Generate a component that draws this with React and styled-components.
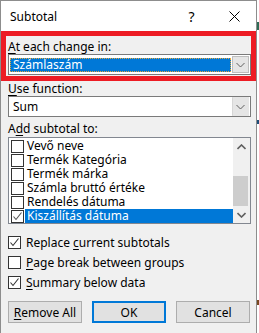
import React from "react";
import styled, { createGlobalStyle } from "styled-components";

const GlobalStyle = createGlobalStyle`
  body {
    margin: 0;
    background: #ffffff;
    font-family: "Noto Sans", "Open Sans", sans-serif;
    font-size: 12px;
    color: #000;
  }
`;

const Screen = styled.div`
  display: flex;
  width: 259px;
  height: 333px;
  overflow: hidden;
`;

const Dialog = styled.div`
  width: 255px;
  height: 332px;
  border: 1px solid #8d8d8d;
  border-bottom: none;
  background: #f0f0f0;
  display: flex;
  flex-direction: column;
`;

const Backdrop = styled.div`
  width: 2px;
  background: linear-gradient(
    #ffffff 0 22px,
    #2e6b55 22px 30px,
    #ffffff 30px 120px,
    #1f4e79 120px 124px,
    #ffffff 124px 300px,
    #7a4a22 300px 305px,
    #ffffff 305px
  );
`;

const TitleBar = styled.div`
  height: 30px;
  background: #ffffff;
  display: flex;
  align-items: center;
  padding-left: 9px;
`;

const Title = styled.div`
  flex: 1;
  line-height: 15px;
`;

const TitleButton = styled.div`
  width: 43px;
  height: 30px;
  display: flex;
  align-items: center;
  justify-content: center;
  font-size: 14px;
`;

const Body = styled.div`
  padding: 0 5px 0 7px;
  display: flex;
  flex-direction: column;
`;

const Highlight = styled.div`
  margin: 0 -5px 0 -7px;
  border: 5px solid #ed1c24;
  padding: 3px 0 1px 2px;
`;

const Label = styled.div`
  line-height: 15px;
  height: 15px;
  margin-top: ${(p) => p.$gap || 0}px;
  white-space: nowrap;
`;

const Key = styled.span`
  text-decoration: underline;
  text-underline-offset: 2px;
`;

const Combo = styled.div`
  height: 19px;
  border: 1px solid #7a7a7a;
  background: #ffffff;
  display: flex;
  align-items: center;
`;

const ComboValue = styled.div`
  flex: 1;
  height: 12px;
  line-height: 12px;
  margin: 0 1px 0 1px;
  padding: 0 2px;
  background: ${(p) => (p.$selected ? "#0078d7" : "transparent")};
  color: ${(p) => (p.$selected ? "#ffffff" : "#000")};
  border: 1px dotted ${(p) => (p.$selected ? "#e9a93a" : "transparent")};
  white-space: nowrap;
`;

const DropButton = styled.div`
  width: 15px;
  height: ${(p) => (p.$framed ? 15 : 17)}px;
  margin-right: 1px;
  background: #e5e5e5;
  border: 1px solid ${(p) => (p.$framed ? "#bdbdbd" : "transparent")};
  border-left: 1px solid ${(p) => (p.$framed ? "#bdbdbd" : "#d6d6d6")};
  display: flex;
  align-items: center;
  justify-content: center;
`;

const ListBox = styled.div`
  margin-top: 1px;
  height: 85px;
  border: 1px solid #828790;
  background: #ffffff;
  display: flex;
`;

const Items = styled.div`
  flex: 1;
  padding-top: 1px;
`;

const Row = styled.div`
  height: 14px;
  display: flex;
  align-items: center;
  padding-left: 2px;
`;

const RowText = styled.div`
  flex: 1;
  height: 14px;
  line-height: 14px;
  margin-left: 1px;
  padding-left: 2px;
  background: ${(p) => (p.$selected ? "#0078d7" : "transparent")};
  color: ${(p) => (p.$selected ? "#ffffff" : "#000")};
  white-space: nowrap;
`;

const Box = styled.div`
  width: 11px;
  height: 11px;
  border: 1px solid #333333;
  background: #ffffff;
  display: flex;
  align-items: center;
  justify-content: center;
  flex-shrink: 0;
`;

const ScrollBar = styled.div`
  width: 17px;
  background: #f0f0f0;
  display: flex;
  flex-direction: column;
`;

const ScrollArrow = styled.div`
  height: 17px;
  display: flex;
  align-items: center;
  justify-content: center;
`;

const Track = styled.div`
  flex: 1;
`;

const Thumb = styled.div`
  margin: 21px 2px 0 0;
  height: 30px;
  background: #cdcdcd;
`;

const Options = styled.div`
  margin-top: 8px;
  display: flex;
  flex-direction: column;
`;

const Option = styled.div`
  height: 20px;
  display: flex;
  align-items: center;
  gap: 5px;
  white-space: nowrap;
`;

const Buttons = styled.div`
  margin-top: 9px;
  display: flex;
  justify-content: space-between;
  padding-right: 1px;
`;

const Button = styled.div`
  width: ${(p) => (p.$default ? 70 : 72)}px;
  height: ${(p) => (p.$default ? 18 : 20)}px;
  border: ${(p) => (p.$default ? "2px solid #0078d7" : "1px solid #adadad")};
  background: #e1e1e1;
  display: flex;
  align-items: center;
  justify-content: center;
`;

const Check = ({ color = "#333" }) => (
  <svg width="11" height="11" viewBox="0 0 11 11">
    <polyline points="1.5,5.5 4,8.5 9.5,1.5" fill="none" stroke={color} strokeWidth="1.1" />
  </svg>
);

const Chevron = ({ up, weight = 1 }) => (
  <svg width="9" height="6" viewBox="0 0 9 6">
    <polyline
      points={up ? "0.5,5 4.5,1 8.5,5" : "0.5,1 4.5,5 8.5,1"}
      fill="none"
      stroke="#606060"
      strokeWidth={weight}
    />
  </svg>
);

const CloseIcon = () => (
  <svg width="11" height="11" viewBox="0 0 11 11">
    <path d="M0.5 0.5 L10.5 10.5 M10.5 0.5 L0.5 10.5" stroke="#000" strokeWidth="1" />
  </svg>
);

const fields = [
  { name: "Vevő neve" },
  { name: "Termék Kategória" },
  { name: "Termék márka" },
  { name: "Számla bruttó értéke" },
  { name: "Rendelés dátuma" },
  { name: "Kiszállítás dátuma", checked: true, selected: true },
];

export default function App() {
  return (
    <Screen>
      <GlobalStyle />
      <Dialog>
        <TitleBar>
          <Title>Subtotal</Title>
          <TitleButton>?</TitleButton>
          <TitleButton>
            <CloseIcon />
          </TitleButton>
        </TitleBar>
        <Body>
          <Highlight>
            <Label>
              <Key>A</Key>t each change in:
            </Label>
            <Combo>
              <ComboValue $selected>Számlaszám</ComboValue>
              <DropButton $framed>
                <Chevron />
              </DropButton>
            </Combo>
          </Highlight>
          <Label>
            <Key>U</Key>se function:
          </Label>
          <Combo>
            <ComboValue>Sum</ComboValue>
            <DropButton>
              <Chevron />
            </DropButton>
          </Combo>
          <Label $gap={4}>
            A<Key>d</Key>d subtotal to:
          </Label>
          <ListBox>
            <Items>
              {fields.map((f) => (
                <Row key={f.name}>
                  <Box>{f.checked && <Check color="#555" />}</Box>
                  <RowText $selected={f.selected}>{f.name}</RowText>
                </Row>
              ))}
            </Items>
            <ScrollBar>
              <ScrollArrow>
                <Chevron up weight={1.6} />
              </ScrollArrow>
              <Track>
                <Thumb />
              </Track>
              <ScrollArrow>
                <Chevron weight={1.6} />
              </ScrollArrow>
            </ScrollBar>
          </ListBox>
          <Options>
            <Option>
              <Box>
                <Check />
              </Box>
              <span>
                Replace <Key>c</Key>urrent subtotals
              </span>
            </Option>
            <Option>
              <Box />
              <span>
                <Key>P</Key>age break between groups
              </span>
            </Option>
            <Option>
              <Box>
                <Check />
              </Box>
              <span>
                <Key>S</Key>ummary below data
              </span>
            </Option>
          </Options>
          <Buttons>
            <Button>
              <span>
                <Key>R</Key>emove All
              </span>
            </Button>
            <Button $default>OK</Button>
            <Button>Cancel</Button>
          </Buttons>
        </Body>
      </Dialog>
      <Backdrop />
    </Screen>
  );
}
